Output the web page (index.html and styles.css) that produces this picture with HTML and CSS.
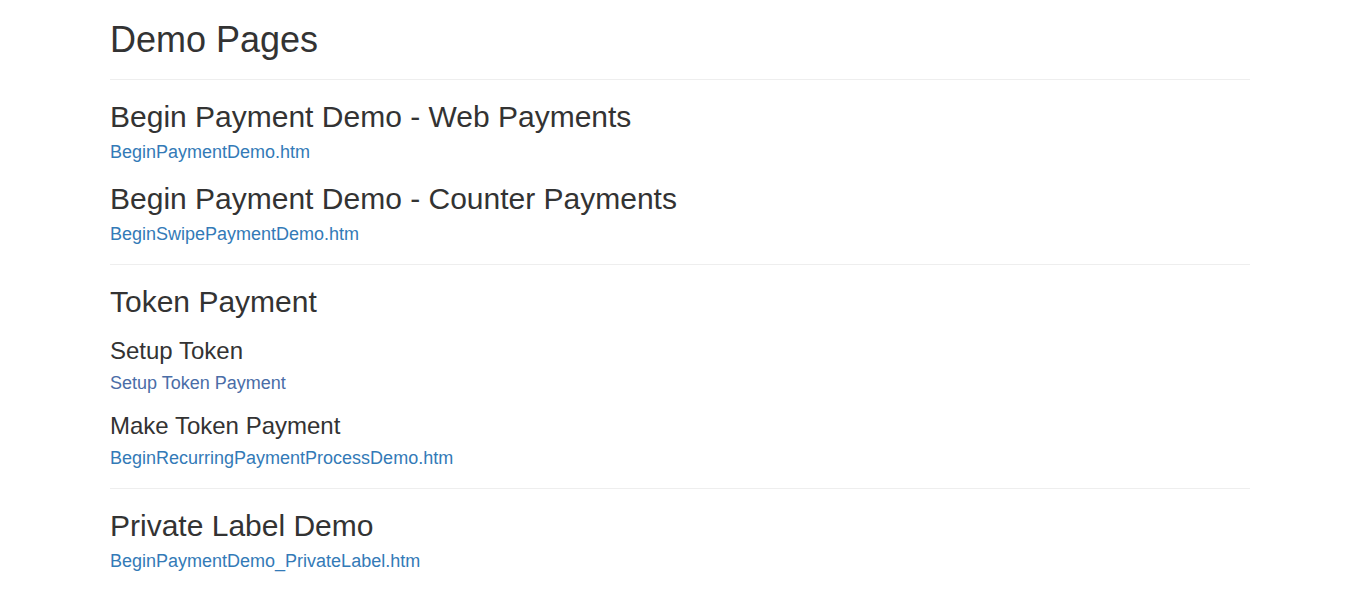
FILE: index.html
```html
<!DOCTYPE html>
<html lang="en">
<head>
<meta charset="utf-8">
<title>Demo Pages</title>
<link rel="stylesheet" href="styles.css">
</head>
<body>
<div class="container">
  <h1 class="title">Demo Pages</h1>
  <hr class="rule">
  <h2 class="section">Begin Payment Demo - Web Payments</h2>
  <h4 class="item"><a class="link" href="#">BeginPaymentDemo.htm</a></h4>
  <h2 class="section">Begin Payment Demo - Counter Payments</h2>
  <h4 class="item"><a class="link" href="#">BeginSwipePaymentDemo.htm</a></h4>
  <hr class="rule">
  <h2 class="section">Token Payment</h2>
  <h3 class="sub">Setup Token</h3>
  <h4 class="item"><a class="link link-visited" href="#">Setup Token Payment</a></h4>
  <h3 class="sub">Make Token Payment</h3>
  <h4 class="item"><a class="link" href="#">BeginRecurringPaymentProcessDemo.htm</a></h4>
  <hr class="rule">
  <h2 class="section">Private Label Demo</h2>
  <h4 class="item"><a class="link" href="#">BeginPaymentDemo_PrivateLabel.htm</a></h4>
</div>
</body>
</html>
```
FILE: styles.css
```css
html, body {
  margin: 0;
  padding: 0;
  background: #fff;
}
body {
  font-family: "Liberation Sans", Arial, sans-serif;
  font-size: 14px;
  line-height: 1.42857;
  color: #333;
}
.container {
  width: 1170px;
  margin: 0 auto;
  padding: 0 15px;
  box-sizing: border-box;
}
.title, .section, .sub, .item {
  font-family: inherit;
  font-weight: 500;
  color: inherit;
}
.title {
  font-size: 36px;
  line-height: 39px;
  margin: 20px 0 10px;
}
.section {
  font-size: 30px;
  line-height: 33px;
  margin: 20px 0 10px;
}
.sub {
  font-size: 24px;
  line-height: 26px;
  margin: 20px 0 10px;
}
.item {
  font-size: 18px;
  line-height: 19px;
  margin: 10px 0;
}
.rule {
  margin: 20px 0;
  border: 0;
  border-top: 1px solid #eee;
  height: 0;
}
.link {
  color: #337ab7;
  text-decoration: none;
}
.link-visited {
  color: #4a6da7;
}
```
